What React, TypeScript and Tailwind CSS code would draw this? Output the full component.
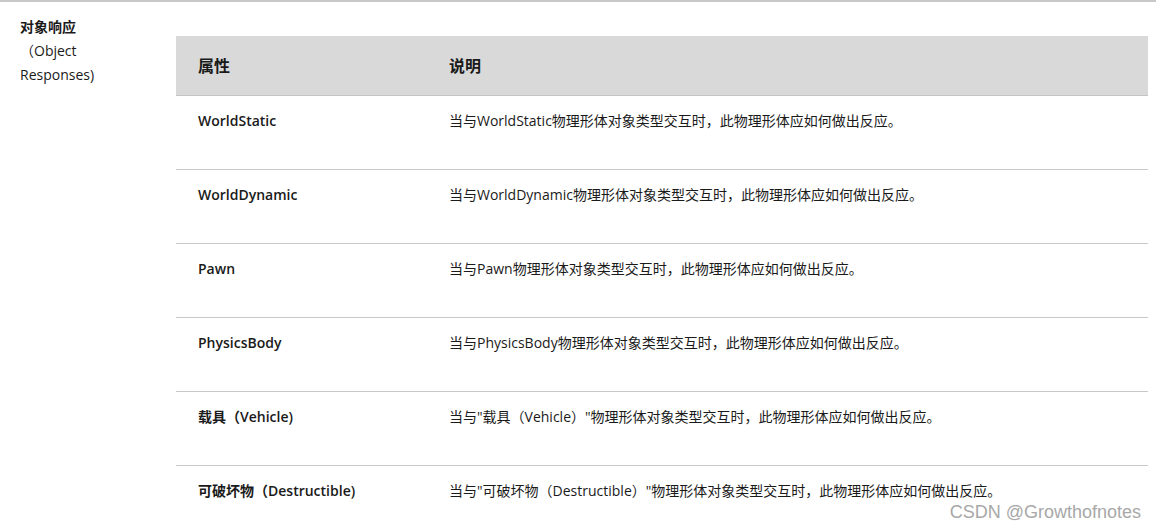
const rows = [
  { name: "WorldStatic", desc: "当与WorldStatic物理形体对象类型交互时，此物理形体应如何做出反应。" },
  { name: "WorldDynamic", desc: "当与WorldDynamic物理形体对象类型交互时，此物理形体应如何做出反应。" },
  { name: "Pawn", desc: "当与Pawn物理形体对象类型交互时，此物理形体应如何做出反应。" },
  { name: "PhysicsBody", desc: "当与PhysicsBody物理形体对象类型交互时，此物理形体应如何做出反应。" },
  { name: "载具（Vehicle)", desc: "当与\"载具（Vehicle）\"物理形体对象类型交互时，此物理形体应如何做出反应。" },
  { name: "可破坏物（Destructible)", desc: "当与\"可破坏物（Destructible）\"物理形体对象类型交互时，此物理形体应如何做出反应。" },
];

const font = "font-['Open_Sans','Noto_Sans_CJK_SC',sans-serif]";

export default function App() {
  return (
    <div className={`relative w-[1156px] h-[531px] overflow-hidden bg-white text-[#1a1a1a] ${font}`}>
      <div className="h-[2px] bg-[#c8c8c8]" />
      <div className="flex">
        <div className="w-[176px] shrink-0 pl-5 pt-[13px] text-[14px] leading-6">
          <div className="font-bold">对象响应</div>
          <div>（Object</div>
          <div>Responses)</div>
        </div>
        <div className="flex-1 mr-2 mt-[34px]">
          <div className="flex h-[60px] items-center bg-[#d9d9d9] border-b border-[#c4c4c4] text-[16px] font-semibold">
            <div className="w-[251px] pl-[22px]">属性</div>
            <div className="flex-1 pl-[22px]">说明</div>
          </div>
          {rows.map((r, i) => (
            <div
              key={r.name}
              className={`flex h-[74px] pt-[13px] ${i < rows.length - 1 ? "border-b border-[#c8c8c8]" : ""}`}
            >
              <div className="w-[251px] pl-[22px] text-[14px] font-semibold leading-6">{r.name}</div>
              <div className="flex-1 pl-[22px] text-[14px] leading-6">{r.desc}</div>
            </div>
          ))}
        </div>
      </div>
      <div className="absolute right-[15px] bottom-[5px] text-[18px] text-[#a8a8a8] font-['Liberation_Sans',sans-serif]">
        CSDN @Growthofnotes
      </div>
    </div>
  );
}
